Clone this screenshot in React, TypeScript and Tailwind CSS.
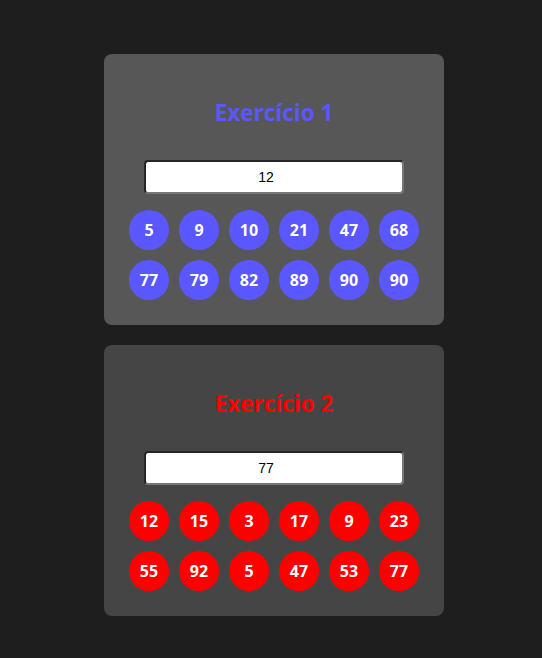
import React from "react";

const cards = [
  {
    title: "Exercício 1",
    value: "12",
    color: "text-[#5b57ff]",
    ball: "bg-[#5b57ff]",
    bg: "bg-[#575757]",
    numbers: [5, 9, 10, 21, 47, 68, 77, 79, 82, 89, 90, 90],
  },
  {
    title: "Exercício 2",
    value: "77",
    color: "text-[#ff0000]",
    ball: "bg-[#ff0000]",
    bg: "bg-[#454545]",
    numbers: [12, 15, 3, 17, 9, 23, 55, 92, 5, 47, 53, 77],
  },
];

export default function App() {
  return (
    <div className="min-h-[658px] bg-[#1e1e1e] flex flex-col items-center pt-[54px] pl-[6px] gap-[20px] font-['Open_Sans','Noto_Sans',sans-serif]">
      {cards.map((card, i) => (
        <div
          key={i}
          className={`${card.bg} w-[340px] h-[271px] rounded-[8px] px-[25px] pt-[25px] flex flex-col items-center`}
        >
          <h1 className={`${card.color} mt-[19px] h-[30px] leading-[30px] text-[22.5px] font-bold`}>
            {card.title}
          </h1>
          <input
            readOnly
            value={card.value}
            className="mt-[32px] w-[260px] h-[34px] bg-white rounded-[4px] border-2 border-t-[#262626] border-l-[#262626] border-b-[#777777] border-r-[#777777] pr-[16px] text-center text-[14px] text-black font-['Liberation_Sans',Arial,sans-serif] outline-none"
          />
          <div className="mt-[16px] grid grid-cols-6 gap-[10px]">
            {card.numbers.map((n, j) => (
              <div
                key={j}
                className={`${card.ball} w-[40px] h-[40px] rounded-full flex items-center justify-center text-white font-bold text-[16px]`}
              >
                {n}
              </div>
            ))}
          </div>
        </div>
      ))}
    </div>
  );
}
